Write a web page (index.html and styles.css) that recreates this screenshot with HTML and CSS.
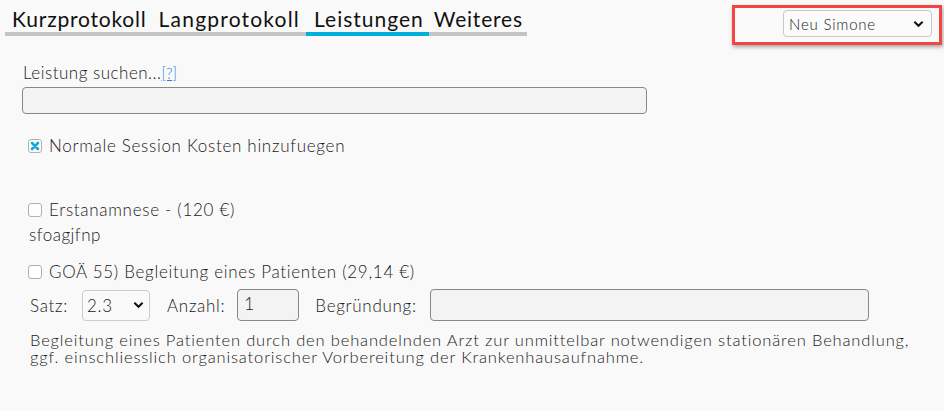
FILE: index.html
```html
<!DOCTYPE html>
<html lang="de">
<head>
<meta charset="utf-8">
<link rel="stylesheet" href="styles.css">
</head>
<body>
<div class="page">
  <header class="topbar">
    <nav class="tabs">
      <span class="tab">Kurzprotokoll</span>
      <span class="tab">Langprotokoll</span>
      <span class="tab active">Leistungen</span>
      <span class="tab">Weiteres</span>
    </nav>
    <div class="userbox">
      <div class="select user-select">
        <span>Neu Simone</span>
        <svg class="chev" viewBox="0 0 12 8" width="11" height="8"><path d="M1.5 1.5 L6 6 L10.5 1.5" fill="none" stroke="#111" stroke-width="2.2"/></svg>
      </div>
    </div>
  </header>

  <section class="search">
    <div class="search-label">Leistung suchen...<a class="help">[?]</a></div>
    <div class="field search-field"></div>
  </section>

  <label class="check-row first">
    <span class="cb checked"><svg viewBox="0 0 10 10" width="10" height="10"><path d="M2 2 L8 8 M8 2 L2 8" stroke="#13a8d8" stroke-width="2.6" stroke-linecap="round"/></svg></span>
    <span>Normale Session Kosten hinzufuegen</span>
  </label>

  <label class="check-row second">
    <span class="cb"></span>
    <span>Erstanamnese - (120 €)</span>
  </label>
  <div class="note">sfoagjfnp</div>

  <label class="check-row third">
    <span class="cb"></span>
    <span>GOÄ 55) Begleitung eines Patienten (29,14 €)</span>
  </label>
  <div class="params">
    <span class="plabel satz-label">Satz:</span>
    <div class="select satz-select"><span>2.3</span><svg class="chev" viewBox="0 0 12 8" width="11" height="8"><path d="M1.5 1.5 L6 6 L10.5 1.5" fill="none" stroke="#111" stroke-width="2.2"/></svg></div>
    <span class="plabel anzahl-label">Anzahl:</span>
    <div class="field anzahl">1</div>
    <span class="plabel begr-label">Begründung:</span>
    <div class="field begruendung"></div>
  </div>
  <p class="desc">Begleitung eines Patienten durch den behandelnden Arzt zur unmittelbar notwendigen stationären Behandlung, ggf. einschliesslich organisatorischer Vorbereitung der Krankenhausaufnahme.</p>
</div>
</body>
</html>
```

FILE: styles.css
```css
html, body {
  margin: 0;
  padding: 0;
  background: #f9f9f9;
  color: #1a1a1a;
  font-family: "Lato", "Noto Sans", sans-serif;
  font-weight: 300;
}
.page {
  width: 944px;
  height: 411px;
  overflow: hidden;
}
.topbar {
  display: flex;
  justify-content: space-between;
  align-items: flex-start;
  padding: 5px 2px 0 5px;
}
.tabs {
  display: flex;
  margin-top: 2px;
  border-bottom: 4px solid #c4c4c4;
  width: 522px;
}
.tab {
  font-size: 21px;
  font-weight: 400;
  letter-spacing: 0.8px;
  color: #111;
  padding: 0 6px 2px 7px;
  margin-bottom: -4px;
  border-bottom: 4px solid transparent;
  line-height: 23px;
  white-space: nowrap;
}
.tab:nth-child(2) { letter-spacing: 1.2px; padding-left: 6px; }
.tab:nth-child(3) { letter-spacing: 1px; padding-left: 8px; padding-right: 5px; }
.tab:nth-child(4) { padding-left: 5px; padding-right: 0; }
.tab.active {
  border-bottom-color: #00aedb;
}
.userbox {
  width: 197px;
  height: 32px;
  border: 3px solid #f44545;
  box-shadow: 1px 2px 4px rgba(0,0,0,0.35);
  display: flex;
  justify-content: flex-end;
  align-items: flex-start;
  padding-top: 2px;
  padding-right: 7px;
  box-sizing: content-box;
}
.select {
  display: flex;
  align-items: center;
  justify-content: space-between;
  border: 1px solid #c8c8c8;
  border-radius: 4px;
  background: #fbfbfb;
  box-sizing: border-box;
}
.user-select {
  width: 149px;
  height: 27px;
  padding: 0 7px 0 5px;
  font-size: 15px;
  letter-spacing: 0.8px;
  color: #222;
  font-weight: 300;
}
.search {
  padding: 18px 0 0 22px;
}
.search-label {
  font-size: 17px;
  line-height: 20px;
  padding-left: 1px;
  letter-spacing: 0.5px;
}
.help {
  color: #2b7fd4;
  text-decoration: underline;
  font-size: 15px;
  letter-spacing: 0;
}
.field {
  border: 1px solid #888;
  border-radius: 4px;
  background: #f3f3f3;
  box-sizing: border-box;
}
.search-field {
  width: 625px;
  height: 27px;
  margin-top: 4px;
}
.check-row {
  display: flex;
  align-items: center;
  gap: 7px;
  padding-left: 28px;
  font-size: 17px;
  line-height: 20px;
  letter-spacing: 0.7px;
}
.check-row.first { margin-top: 22px; }
.check-row.second { margin-top: 44px; }
.check-row.third { margin-top: 17px; }
.cb {
  width: 14px;
  height: 14px;
  border: 1px solid #b0b0b0;
  border-radius: 3px;
  box-sizing: border-box;
  background: #fdfdfd;
  display: flex;
  align-items: center;
  justify-content: center;
}
.note {
  padding-left: 29px;
  font-size: 17px;
  line-height: 20px;
  margin-top: 5px;
  letter-spacing: 0.5px;
}
.params {
  display: flex;
  align-items: center;
  padding-left: 30px;
  margin-top: 7px;
  font-size: 17px;
  letter-spacing: 0.7px;
}
.satz-label { margin-right: 14px; }
.anzahl-label { margin-right: 12px; }
.begr-label { margin-right: 13px; }
.satz-select {
  width: 68px;
  height: 31px;
  padding: 0 5px 0 4px;
  border-color: #ccc;
  margin-right: 17px;
  background: #fafafa;
}
.anzahl {
  width: 62px;
  height: 32px;
  padding: 3px 0 0 6px;
  margin-right: 16px;
}
.begruendung {
  width: 439px;
  height: 32px;
}
.desc {
  margin: 11px 0 0 30px;
  width: 900px;
  font-size: 16.5px;
  line-height: 17px;
  letter-spacing: 0.85px;
}
```
